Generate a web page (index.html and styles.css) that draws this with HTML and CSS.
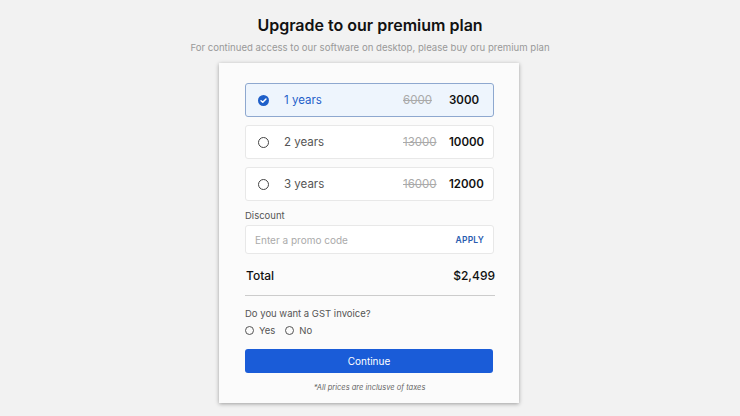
FILE: index.html
```html
<!DOCTYPE html>
<html>
<head>
<meta charset="utf-8">
<link rel="stylesheet" href="styles.css">
</head>
<body>
<div class="page">
  <h1 class="title">Upgrade to our premium plan</h1>
  <p class="subtitle">For continued access to our software on desktop, please buy oru premium plan</p>
  <div class="card">
    <div class="plans">
      <div class="plan selected">
        <span class="check">
          <svg viewBox="0 0 12 12" width="11" height="11"><circle cx="6" cy="6" r="6" fill="#1f5fc9"/><path d="M3.3 6.2 L5.2 8 L8.7 4.3" fill="none" stroke="#fff" stroke-width="1.6" stroke-linecap="round" stroke-linejoin="round"/></svg>
        </span>
        <span class="plan-name">1 years</span>
        <span class="old">6000</span>
        <span class="new">3000</span>
      </div>
      <div class="plan">
        <span class="radio"></span>
        <span class="plan-name">2 years</span>
        <span class="old">13000</span>
        <span class="new">10000</span>
      </div>
      <div class="plan">
        <span class="radio"></span>
        <span class="plan-name">3 years</span>
        <span class="old">16000</span>
        <span class="new">12000</span>
      </div>
    </div>
    <div class="discount">
      <div class="label">Discount</div>
      <div class="promo">
        <span class="placeholder">Enter a promo code</span>
        <span class="apply">APPLY</span>
      </div>
    </div>
    <div class="total">
      <span>Total</span>
      <span>$2,499</span>
    </div>
    <div class="gst">
      <div class="label">Do you want a GST invoice?</div>
      <div class="choices">
        <span class="choice"><span class="radio small"></span>Yes</span>
        <span class="choice"><span class="radio small"></span>No</span>
      </div>
    </div>
    <button class="continue">Continue</button>
    <p class="note">*All prices are inclusve of taxes</p>
  </div>
</div>
</body>
</html>
```
FILE: styles.css
```css
* { box-sizing: border-box; }
html, body { margin: 0; padding: 0; }
body {
  background: #f2f2f2;
  font-family: "Inter", "Open Sans", sans-serif;
  color: #111;
  width: 740px;
  height: 416px;
  overflow: hidden;
}
.page {
  display: flex;
  flex-direction: column;
  align-items: center;
  padding-top: 14px;
}
.title {
  margin: 0;
  font-size: 16px;
  font-weight: 600;
  line-height: 22px;
  color: #111;
}
.subtitle {
  margin: 5px 0 0;
  font-size: 9.6px;
  line-height: 13px;
  color: #999;
}
.card {
  margin-top: 9px;
  margin-right: 2px;
  width: 300px;
  height: 340px;
  background: #fbfbfb;
  box-shadow: 0 1px 4px rgba(0,0,0,0.35);
  padding: 20px 25px 0 26px;
  display: flex;
  flex-direction: column;
}
.plans { display: flex; flex-direction: column; gap: 8px; }
.plan {
  height: 34px;
  border: 1px solid #e8e8e8;
  border-radius: 3px;
  background: #fff;
  display: flex;
  align-items: center;
  padding-left: 12px;
  font-size: 11.5px;
}
.plan.selected {
  background: #eef5fd;
  border-color: #8ea8cf;
}
.check { width: 11px; height: 11px; display: flex; }
.radio {
  width: 11px; height: 11px;
  border: 1.2px solid #444;
  border-radius: 50%;
  display: inline-block;
  flex: none;
}
.plan-name { margin-left: 15px; flex: 1; color: #555; }
.selected .plan-name { color: #1f5fc9; }
.old { width: 46px; color: #aaa; text-decoration: line-through; }
.new { width: 44px; font-weight: 600; color: #111; }
.discount { margin-top: 9px; }
.label { font-size: 9.5px; color: #555; line-height: 12px; }
.promo {
  margin-top: 3px;
  height: 29px;
  border: 1px solid #e8e8e8;
  border-radius: 3px;
  background: #fff;
  display: flex;
  align-items: center;
  justify-content: space-between;
  padding: 0 9px 0 9px;
}
.placeholder { font-size: 10px; color: #aaa; }
.apply { font-size: 8.5px; font-weight: 600; color: #2a5db0; letter-spacing: 0.2px; }
.total {
  margin-top: 14px;
  padding: 0 0 11px 1px;
  border-bottom: 1.5px solid #ccc;
  display: flex;
  justify-content: space-between;
  font-size: 12px;
  font-weight: 500;
  line-height: 16px;
  margin-right: -1px;
}
.gst { margin-top: 12px; }
.choices { display: flex; gap: 10px; margin-top: 5px; }
.choice { display: flex; align-items: center; gap: 5px; font-size: 9.5px; color: #555; }
.radio.small { width: 9px; height: 9px; border-color: #555; }
.continue {
  margin-top: 13px;
  height: 24px;
  border: none;
  border-radius: 3px;
  background: #1a5cd8;
  color: #fff;
  font-family: inherit;
  font-size: 10px;
  width: 248px;
}
.note {
  margin: 10px 0 0;
  text-align: center;
  font-size: 7.5px;
  font-style: italic;
  color: #666;
}
```
